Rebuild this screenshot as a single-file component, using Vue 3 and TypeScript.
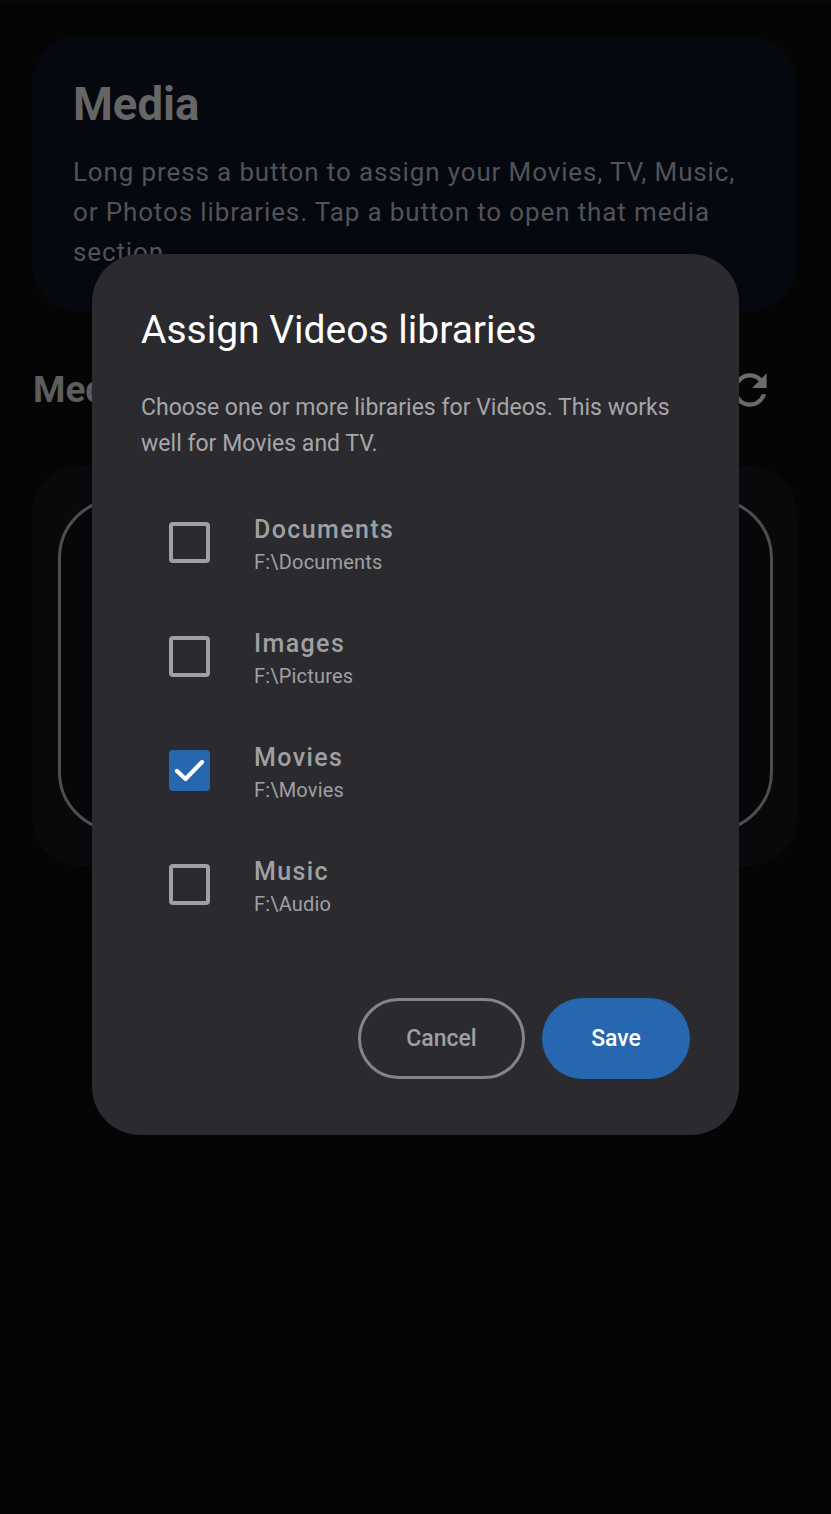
<script setup lang="ts">
interface Library { name: string; path: string; checked: boolean }
const libraries: Library[] = [
  { name: 'Documents', path: 'F:\\Documents', checked: false },
  { name: 'Images', path: 'F:\\Pictures', checked: false },
  { name: 'Movies', path: 'F:\\Movies', checked: true },
  { name: 'Music', path: 'F:\\Audio', checked: false },
]
</script>

<template>
  <div class="page">
    <div class="status"></div>
    <main class="content">
      <section class="hero">
        <h1>Media</h1>
        <p>Long press a button to assign your Movies, TV, Music, or Photos libraries. Tap a button to open that media section.</p>
      </section>
      <div class="section-head">
        <h2>Media</h2>
        <svg class="refresh" viewBox="0 0 24 24" width="50" height="50" fill="#6b6b6b">
          <path d="M17.65 6.35A7.96 7.96 0 0 0 12 4a8 8 0 1 0 7.73 10h-2.08A6 6 0 1 1 12 6c1.66 0 3.14.69 4.22 1.78L13 11h7V4l-2.35 2.35z" />
        </svg>
      </div>
      <section class="panel">
        <div class="tile"></div>
      </section>
    </main>

    <div class="dialog">
      <h3>Assign Videos libraries</h3>
      <p class="lead">Choose one or more libraries for Videos. This works well for Movies and TV.</p>
      <ul class="list">
        <li v-for="lib in libraries" :key="lib.name" class="row">
          <span class="box" :class="{ on: lib.checked }">
            <svg v-if="lib.checked" viewBox="0 0 41 41" width="41" height="41" fill="none" stroke="#fff" stroke-width="4.2" stroke-linecap="round" stroke-linejoin="round">
              <path d="M8 21l8.500 8L33 12" />
            </svg>
          </span>
          <span class="text">
            <span class="name">{{ lib.name }}</span>
            <span class="path">{{ lib.path }}</span>
          </span>
        </li>
      </ul>
      <div class="actions">
        <button class="btn cancel" type="button">Cancel</button>
        <button class="btn save" type="button">Save</button>
      </div>
    </div>
  </div>
</template>

<style>
html, body { margin: 0; background: #050505; }
</style>

<style scoped>
.page {
  position: relative;
  width: 831px;
  height: 1514px;
  overflow: hidden;
  background: #050505;
  font-family: Roboto, "Liberation Sans", sans-serif;
}
.status { height: 3px; background: #0a0a0c; }
.content { display: flex; flex-direction: column; padding: 33px 34px 0 32px; }
.hero {
  height: 276px;
  box-sizing: border-box;
  padding: 41px 41px 0;
  border-radius: 48px;
  background: #05080f;
}
.hero h1 {
  margin: 0;
  font-size: 45.5px;
  line-height: 56px;
  font-weight: 700;
  color: #666;
}
.hero p {
  margin: 19px 0 0;
  font-size: 26px;
  line-height: 40px;
  letter-spacing: 0.87px;
  color: #525359;
}
.section-head {
  display: flex;
  align-items: center;
  justify-content: space-between;
  height: 50px;
  margin-top: 53px;
  padding-right: 22px;
}
.section-head h2 {
  margin: 0 0 0 1px;
  font-size: 37px;
  line-height: 50px;
  font-weight: 700;
  color: #5d5d5d;
}
.refresh { display: block; }
.panel {
  height: 400px;
  box-sizing: border-box;
  margin-top: 51px;
  padding: 32px 24px 34px 26px;
  border-radius: 48px;
  background: #09090b;
}
.tile {
  height: 100%;
  box-sizing: border-box;
  border: 3px solid #4e4e50;
  border-radius: 60px;
  background: #070709;
}
.dialog {
  position: absolute;
  left: 92px;
  top: 254px;
  width: 647px;
  height: 881px;
  box-sizing: border-box;
  padding: 51px 49px 0;
  border-radius: 48px;
  background: #2a2a2f;
}
.dialog h3 {
  margin: 0;
  font-size: 39px;
  line-height: 50px;
  font-weight: 400;
  color: #fff;
}
.lead {
  margin: 35px 0 0;
  font-size: 23.05px;
  line-height: 36px;
  color: #a6a6aa;
}
.list { list-style: none; margin: 23px 0 0; padding: 0; }
.row {
  display: flex;
  align-items: center;
  height: 114px;
  padding-left: 28px;
}
.box {
  flex: none;
  width: 41px;
  height: 41px;
  box-sizing: border-box;
  border: 4px solid #a0a0a2;
  border-radius: 4px;
}
.box.on { border: 0; background: #2767b0; }
.box svg { display: block; }
.text { display: flex; flex-direction: column; margin: 6px 0 0 44px; }
.name {
  font-size: 25px;
  line-height: 32px;
  font-weight: 500;
  letter-spacing: 1.4px;
  color: #a0a0a3;
}
.path {
  margin-top: 2px;
  font-size: 20px;
  line-height: 28px;
  letter-spacing: 0.2px;
  color: #a0a0a3;
}
.actions {
  display: flex;
  justify-content: flex-end;
  gap: 17px;
  margin-top: 57px;
}
.btn {
  height: 81px;
  box-sizing: border-box;
  border-radius: 41px;
  font-family: inherit;
  font-size: 23px;
  font-weight: 500;
  padding: 0;
}
.cancel {
  width: 167px;
  border: 3px solid #858587;
  background: transparent;
  color: #a0a0a3;
}
.save {
  width: 148px;
  border: 0;
  background: #2767b0;
  color: #fff;
}
</style>
